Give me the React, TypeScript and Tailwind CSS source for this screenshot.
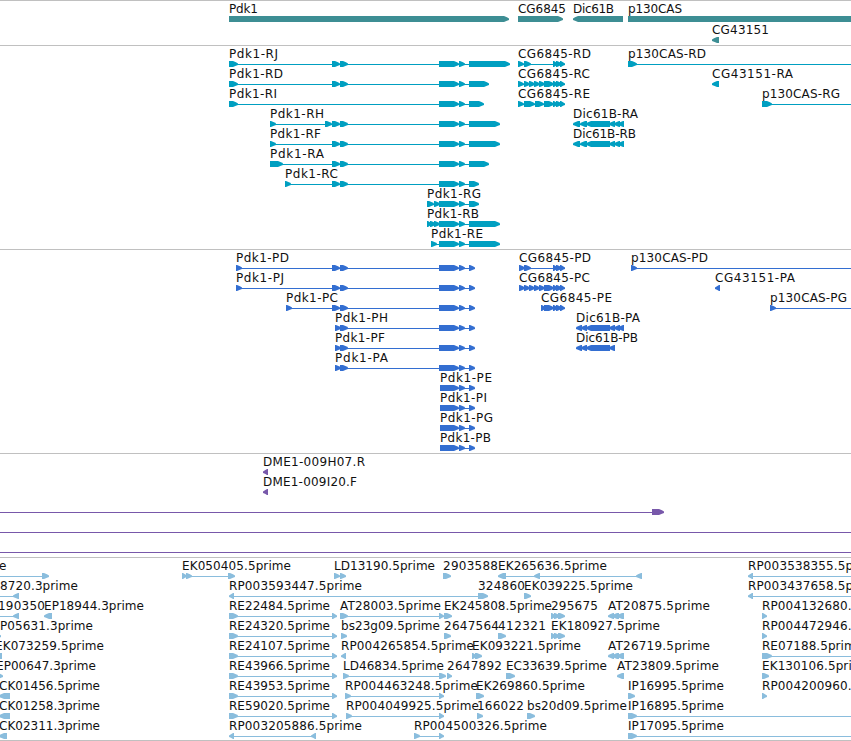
type Strand = 'fwd' | 'rev';
type Span = [number, number];

interface Feature {
  row: number;
  // label text, left edge and right edge
  label?: [string, number, number];
  blocks: Span[];
  strand?: Strand;
  line?: Span;
}

interface TrackProps {
  name: string;
  features: Feature[];
  height: number;
  rowHeight?: number;
  colorClass: string;
}

const WIDTH = 851;
const HEAD = 6;

const fwd = (row: number, text: string, x: number, end: number, blocks: Span[], line?: Span): Feature => ({
  row,
  label: [text, x, end],
  blocks,
  line,
});

const rev = (row: number, text: string, x: number, end: number, blocks: Span[], line?: Span): Feature => ({
  row,
  label: [text, x, end],
  blocks,
  strand: 'rev',
  line,
});

// shared exons
const MID: Span[] = [[332, 340], [340, 348]];
const BIG: Span[] = [[439, 459], [459, 465]];
const CG_END: Span[] = [[553, 558], [556, 562], [560, 565]];
const DIC_END: Span[] = [[609, 615], [614, 620], [618, 624]];
const RE_ENDS: Span[] = [[229, 238], [332, 337]];
const AT_ENDS: Span[] = [[608, 614], [612, 619], [617, 624]];
const EK_GROUP: Span[] = [[551, 556], [554, 560], [558, 565]];

const genes: Feature[] = [
  fwd(0, 'Pdk1', 229, 258, [[229, 509]]),
  fwd(0, 'CG6845', 518, 566, [[518, 563]]),
  rev(0, 'Dic61B', 573, 614, [[573, 623]]),
  fwd(0, 'p130CAS', 628, 682, [[628, 870]]),
  rev(1, 'CG43151', 712, 769, [[712, 719]]),
];

const transcripts: Feature[] = [
  fwd(0, 'Pdk1-RJ', 229, 278, [[229, 238], ...MID, ...BIG, [469, 510]]),
  fwd(1, 'Pdk1-RD', 229, 283, [[229, 238], ...MID, ...BIG, [469, 489]]),
  fwd(2, 'Pdk1-RI', 229, 277, [[229, 238], ...BIG, [469, 484]]),
  fwd(3, 'Pdk1-RH', 270, 324, [[270, 276], [325, 332], ...MID, ...BIG, [469, 500]]),
  fwd(4, 'Pdk1-RF', 270, 321, [[270, 276], ...MID, ...BIG, [469, 500]]),
  fwd(5, 'Pdk1-RA', 270, 324, [[270, 283], ...MID, ...BIG, [469, 489]]),
  fwd(6, 'Pdk1-RC', 285, 338, [[285, 291], ...MID, ...BIG, [469, 479]]),
  fwd(7, 'Pdk1-RG', 427, 481, [[427, 434], [434, 440], ...BIG, [469, 479]]),
  fwd(8, 'Pdk1-RB', 427, 479, [[427, 432], [430, 436], [434, 440], ...BIG, [469, 500]]),
  fwd(9, 'Pdk1-RE', 431, 483, [[431, 437], ...BIG, [469, 500]]),
  fwd(0, 'CG6845-RD', 518, 591, [[518, 524], [524, 531], ...CG_END]),
  fwd(1, 'CG6845-RC', 518, 590, [[518, 524], [524, 530], [529, 535], [534, 540], [539, 545], [544, 554], ...CG_END]),
  fwd(2, 'CG6845-RE', 518, 590, [[518, 524], [524, 535], [535, 544], [544, 554], ...CG_END]),
  rev(3, 'Dic61B-RA', 573, 638, [[573, 580], [580, 587], [586, 610], ...DIC_END]),
  rev(4, 'Dic61B-RB', 573, 636, [[573, 580], [580, 587], [586, 610], ...DIC_END]),
  fwd(0, 'p130CAS-RD', 628, 706, [[628, 637]], [628, WIDTH]),
  rev(1, 'CG43151-RA', 712, 793, [[712, 719]]),
  fwd(2, 'p130CAS-RG', 762, 840, [[762, 772]], [762, WIDTH]),
];

const proteins: Feature[] = [
  fwd(0, 'Pdk1-PD', 236, 289, [[236, 242], ...MID, ...BIG, [469, 475]]),
  fwd(1, 'Pdk1-PJ', 236, 284, [[236, 242], ...MID, ...BIG, [469, 475]]),
  fwd(2, 'Pdk1-PC', 286, 338, [[286, 292], ...MID, ...BIG, [469, 475]]),
  fwd(3, 'Pdk1-PH', 335, 388, [[335, 341], [340, 348], ...BIG, [469, 475]]),
  fwd(4, 'Pdk1-PF', 335, 385, [[335, 341], [340, 348], ...BIG, [469, 475]]),
  fwd(5, 'Pdk1-PA', 335, 388, [[335, 341], [340, 348], ...BIG, [469, 475]]),
  fwd(6, 'Pdk1-PE', 440, 492, [[440, 459], [459, 465], [469, 475]]),
  fwd(7, 'Pdk1-PI', 440, 487, [[440, 459], [459, 465], [469, 475]]),
  fwd(8, 'Pdk1-PG', 440, 493, [[440, 459], [459, 465], [469, 475]]),
  fwd(9, 'Pdk1-PB', 440, 491, [[440, 459], [459, 465], [469, 475]]),
  fwd(0, 'CG6845-PD', 519, 591, [[519, 525], [524, 531], ...CG_END]),
  fwd(1, 'CG6845-PC', 519, 590, [[519, 525], [524, 530], [529, 535], [534, 540], [539, 545], [544, 554], ...CG_END]),
  fwd(2, 'CG6845-PE', 541, 612, [[541, 546], [544, 554], ...CG_END]),
  rev(3, 'Dic61B-PA', 576, 640, [[576, 582], [581, 587], [586, 610], ...DIC_END]),
  rev(4, 'Dic61B-PB', 576, 638, [[576, 582], [581, 587], [586, 610], [609, 615]]),
  fwd(0, 'p130CAS-PD', 631, 708, [[631, 637]], [631, WIDTH]),
  rev(1, 'CG43151-PA', 715, 795, [[715, 720]]),
  fwd(2, 'p130CAS-PG', 770, 847, [[770, 776]], [770, WIDTH]),
];

const clones: Feature[] = [
  rev(0, 'DME1-009H07.R', 263, 365, [[263, 268]]),
  rev(1, 'DME1-009I20.F', 263, 357, [[263, 268]]),
  { row: 2, blocks: [[652, 664]], line: [0, 660] },
  { row: 3, blocks: [], line: [0, WIDTH] },
  { row: 4, blocks: [], line: [0, WIDTH] },
];

const insertions: Feature[] = [
  fwd(0, 'e', -1, 6, [[42, 49]], [0, 45]),
  fwd(0, 'EK050405.5prime', 182, 291, [[182, 187], [186, 192], [228, 235]]),
  fwd(0, 'LD13190.5prime', 334, 435, [[334, 340], [340, 346]]),
  fwd(0, '2903588', 443, 498, [[443, 451]]),
  rev(0, 'EK265636.5prime', 498, 607, [[498, 506], [534, 540], [636, 642]]),
  rev(0, 'RP003538355.5prime', 748, 881, [[748, 753]], [748, WIDTH]),

  rev(1, '8720.3prime', 0, 78, [[13, 19]], [0, 19]),
  rev(1, 'RP003593447.5prime', 229, 362, [[229, 234]], [229, 480]),
  fwd(1, '324860', 478, 525, [[478, 488]]),
  fwd(1, 'EK039225.5prime', 524, 633, [[524, 531]]),
  rev(1, 'RP003437658.5prime', 748, 881, [[748, 753]], [748, WIDTH]),

  rev(2, '190350', -2, 45, [[13, 19]], [0, 19]),
  rev(2, 'EP18944.3prime', 44, 144, [[44, 52]]),
  fwd(2, 'RE22484.5prime', 229, 330, RE_ENDS),
  fwd(2, 'AT28003.5prime', 340, 441, [[340, 348], [439, 444]]),
  fwd(2, 'EK245808.5prime', 444, 552, [[444, 452]]),
  fwd(2, '295675', 551, 598, EK_GROUP),
  rev(2, 'AT20875.5prime', 608, 710, AT_ENDS),
  fwd(2, 'RP004132680.5prime', 762, 895, [[762, 767]]),

  fwd(3, 'P05631.3prime', 0, 93, [[-4, 1]]),
  fwd(3, 'RE24320.5prime', 229, 330, RE_ENDS),
  fwd(3, 'bs23g09.5prime', 341, 440, [[341, 347]]),
  fwd(3, '2647564', 444, 499, [[444, 451]]),
  fwd(3, '412321', 498, 546, [[498, 506]]),
  fwd(3, 'EK180927.5prime', 551, 660, EK_GROUP),
  fwd(3, 'RP004472946.5prime', 762, 895, [[762, 767]]),

  rev(4, 'EK073259.5prime', -5, 104, [[-8, 2]]),
  fwd(4, 'RE24107.5prime', 229, 330, RE_ENDS),
  rev(4, 'RP004265854.5prime', 341, 474, [[341, 346]]),
  fwd(4, 'EK093221.5prime', 472, 581, [[472, 477], [475, 482]]),
  rev(4, 'AT26719.5prime', 608, 710, AT_ENDS),
  fwd(4, 'RE07188.5prime', 762, 863, [[762, 772]], [762, WIDTH]),

  fwd(5, 'EP00647.3prime', -4, 96, [[-4, 3]]),
  fwd(5, 'RE43966.5prime', 229, 330, RE_ENDS),
  fwd(5, 'LD46834.5prime', 343, 444, [[343, 349], [439, 446]]),
  fwd(5, '2647892', 447, 502, [[447, 452]]),
  fwd(5, 'EC33639.5prime', 506, 607, [[506, 515]]),
  rev(5, 'AT23809.5prime', 617, 719, [[617, 624]]),
  fwd(5, 'EK130106.5prime', 762, 871, [[762, 769]]),

  rev(6, 'CK01456.5prime', -1, 100, [[-1, 10]]),
  fwd(6, 'RE43953.5prime', 229, 330, RE_ENDS),
  fwd(6, 'RP004463248.5prime', 345, 478, [[345, 351], [439, 444]]),
  fwd(6, 'EK269860.5prime', 476, 585, [[476, 484]]),
  fwd(6, 'IP16995.5prime', 628, 724, [[628, 635]]),
  fwd(6, 'RP004200960.5prime', 762, 895, [[762, 767]]),

  rev(7, 'CK01258.3prime', -1, 100, [[-1, 10]]),
  fwd(7, 'RE59020.5prime', 229, 330, RE_ENDS),
  fwd(7, 'RP004049925.5prime', 346, 479, [[346, 352], [439, 444]]),
  fwd(7, '166022', 477, 524, [[477, 483]]),
  fwd(7, 'bs20d09.5prime', 527, 627, [[527, 535]]),
  fwd(7, 'IP16895.5prime', 628, 724, [[628, 637]], [628, WIDTH]),

  rev(8, 'CK02311.3prime', -1, 100, [[-1, 7]]),
  rev(8, 'RP003205886.5prime', 229, 362, [[229, 234], [311, 316]]),
  fwd(8, 'RP004500326.5prime', 414, 547, [[414, 420], [439, 444]]),
  fwd(8, 'IP17095.5prime', 628, 724, [[628, 637]], [628, WIDTH]),
];

// block with a slightly convex arrow head on its leading edge
const blockPath = ([a, b]: Span, strand: Strand, y: number) => {
  const head = Math.min(HEAD, b - a) - 1;
  const [tail, tip, dir] = strand === 'fwd' ? [a, b, 1] : [b, a, -1];
  const neck = tip - dir * head;
  const cheek = tip - dir * 2;
  return `M${tail} ${y}H${neck}L${cheek} ${y + 1.3}L${tip} ${y + 2.4}V${y + 4}L${cheek} ${y + 4.8}L${neck} ${y + 6}H${tail}Z`;
};

const Track = ({ name, features, height, rowHeight = 20, colorClass }: TrackProps) => (
  <section aria-label={name} className="border-t border-[#c0c0c0]">
    <svg width={WIDTH} height={height} className={`block ${colorClass}`}>
      {features.map((feature, i) => {
        const top = feature.row * rowHeight;
        const { blocks, strand = 'fwd' } = feature;
        const line = feature.line ?? [blocks[0][0], blocks[blocks.length - 1][1] - 1];
        return (
          <g key={i}>
            <rect x={line[0]} y={top + 18} width={line[1] - line[0]} height={1} fill="currentColor" />
            {blocks.map((block, j) => (
              <path key={j} d={blockPath(block, strand, top + 15)} fill="currentColor" />
            ))}
            {feature.label && (
              <text
                x={feature.label[1]}
                y={top + 12}
                textLength={feature.label[2] - feature.label[1]}
                className="fill-[#111] text-[12px]"
              >
                {feature.label[0]}
              </text>
            )}
          </g>
        );
      })}
    </svg>
  </section>
);

export default function App() {
  return (
    <main className="w-[851px] h-[741px] overflow-hidden bg-white border-b border-[#c0c0c0] font-['DejaVu_Sans',sans-serif]">
      <Track name="Genes" features={genes} height={44} rowHeight={21} colorClass="text-[#3d8e94]" />
      <Track name="Transcripts" features={transcripts} height={203} colorClass="text-[#009fc1]" />
      <Track name="Proteins" features={proteins} height={203} colorClass="text-[#336ed1]" />
      <Track name="Clones" features={clones} height={103} colorClass="text-[#7858aa]" />
      <Track name="Insertions" features={insertions} height={182} colorClass="text-[#8abddd]" />
    </main>
  );
}
